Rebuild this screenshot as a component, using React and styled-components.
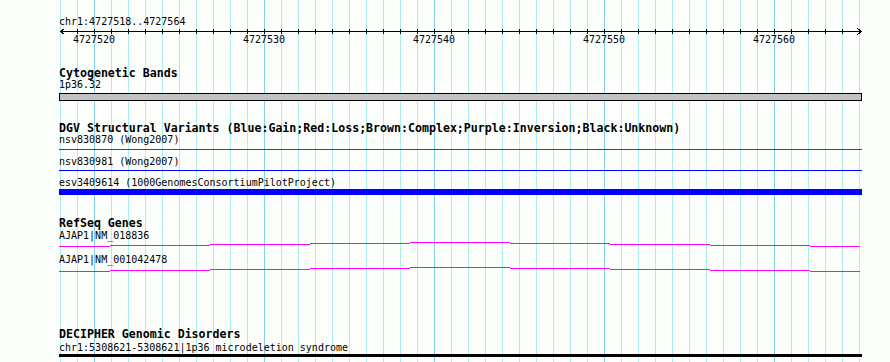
import React from 'react'
import styled, { createGlobalStyle } from 'styled-components'

const GlobalStyle = createGlobalStyle`
html, body {
    margin: 0;
    padding: 0;
    background: #fcfefc;
    overflow: hidden;
}
`

// one unit = 17px, first grid line sits 1px into the panel
const UNIT = 17
const MAJORS = [4727520, 4727530, 4727540, 4727550, 4727560]
const START = 4727518

// gene intron trace: x ranges in panel coords, y offset (rows up from base)
const GENE_STEPS = [
    [0, 51, 0], [51, 151, 1], [151, 251, 2], [251, 351, 3], [351, 451, 4],
    [451, 551, 3], [551, 651, 2], [651, 751, 1], [751, 801, 0],
]

const Ruler = () => {
    const ticks = []
    for (let k = 1; k <= 46; k++) ticks.push(1 + k * UNIT)
    return (
        <RulerSvg width="803" height="20" viewBox="0 0 803 20">
            <line x1="1" y1="3.5" x2="803" y2="3.5" stroke="#000" strokeWidth="1" />
            <polyline points="5.5,0.5 1.5,3.5 5.5,6.5" fill="none" stroke="#000" strokeWidth="1" />
            <polyline points="798.5,0.5 802.5,3.5 798.5,6.5" fill="none" stroke="#000" strokeWidth="1" />
            {ticks.map(x => (
                <line key={x} x1={x + 0.5} y1="1" x2={x + 0.5} y2="6" stroke="#000" strokeWidth="1" />
            ))}
            {MAJORS.map(m => (
                <TickText key={m} x={1 + (m - START) * UNIT} y="15" textAnchor="middle">{m}</TickText>
            ))}
        </RulerSvg>
    )
}

const GeneTrace = ({ base }) => (
    <GeneSvg width="803" height="6" viewBox="0 0 803 6">
        {GENE_STEPS.map(([x1, x2, up]) => (
            <rect key={x1} x={x1} y={base - up} width={x2 - x1} height="1" fill="#ff00ff" />
        ))}
    </GeneSvg>
)

const App = () => {
    return (
        <Page>
            <GlobalStyle />
            <Panel>
                <RulerLabel>chr1:4727518..4727564</RulerLabel>
                <Ruler />

                <TrackTitle $gap={19}>Cytogenetic Bands</TrackTitle>
                <FeatureLabel>1p36.32</FeatureLabel>
                <BandBar />

                <TrackTitle $gap={21}>DGV Structural Variants (Blue:Gain;Red:Loss;Brown:Complex;Purple:Inversion;Black:Unknown)</TrackTitle>
                <FeatureLabel>nsv830870 (Wong2007)</FeatureLabel>
                <FeatureBar $gap={3} $h={1} $color="#ee0000" />
                <FeatureLabel $gap={6}>nsv830981 (Wong2007)</FeatureLabel>
                <FeatureBar $gap={2} $h={1} $color="#0000ff" />
                <FeatureLabel $gap={6}>esv3409614 (1000GenomesConsortiumPilotProject)</FeatureLabel>
                <FeatureBar $h={6} $color="#0000ff" />

                <TrackTitle $gap={22}>RefSeq Genes</TrackTitle>
                <FeatureLabel $gap={1}>AJAP1|NM_018836</FeatureLabel>
                <GeneTrace base={4} />
                <FeatureLabel $gap={6}>AJAP1|NM_001042478</FeatureLabel>
                <GeneTrace base={5} />

                <TrackTitle $gap={56}>DECIPHER Genomic Disorders</TrackTitle>
                <FeatureLabel $gap={2}>chr1:5308621-5308621|1p36 microdeletion syndrome</FeatureLabel>
                <FeatureBar $h={3} $color="#000" />
            </Panel>
        </Page>
    )
}

export default App

const Page = styled.div`
padding-left: 59px;
height: 362px;
`

const Panel = styled.div`
display: flex;
flex-direction: column;
width: 803px;
height: 362px;
overflow: hidden;
background-image:
    linear-gradient(to right, #87ceeb 0, #87ceeb 1px, transparent 1px),
    linear-gradient(to right, #afeeee 0, #afeeee 1px, transparent 1px);
background-size: 170px 100%, 17px 100%;
background-position: 35px 0, 1px 0;
background-repeat: repeat-x;
& > * {
    flex-shrink: 0;
}
`

const RulerLabel = styled.div`
margin-top: 16px;
height: 12px;
font-family: "DejaVu Sans Mono", monospace;
font-size: 10px;
line-height: 12px;
color: #000;
white-space: nowrap;
`

const RulerSvg = styled.svg`
display: block;
shape-rendering: crispEdges;
`

const TickText = styled.text`
font-family: "DejaVu Sans Mono", monospace;
font-size: 10px;
fill: #000;
`

const TrackTitle = styled.div`
margin-top: ${p => p.$gap || 0}px;
height: 12px;
font-family: "DejaVu Sans Mono", monospace;
font-weight: bold;
font-size: 11.6px;
line-height: 12px;
color: #000;
white-space: nowrap;
`

const FeatureLabel = styled.div`
margin-top: ${p => p.$gap || 0}px;
height: 12px;
font-family: "DejaVu Sans Mono", monospace;
font-size: 10px;
line-height: 12px;
color: #000;
white-space: nowrap;
`

const BandBar = styled.div`
margin-top: 2px;
height: 8px;
box-sizing: border-box;
background: #c3c1c3;
border: 1px solid #000;
`

const FeatureBar = styled.div`
margin-top: ${p => p.$gap || 0}px;
height: ${p => p.$h}px;
background: ${p => p.$color};
`

const GeneSvg = styled.svg`
display: block;
shape-rendering: crispEdges;
`
